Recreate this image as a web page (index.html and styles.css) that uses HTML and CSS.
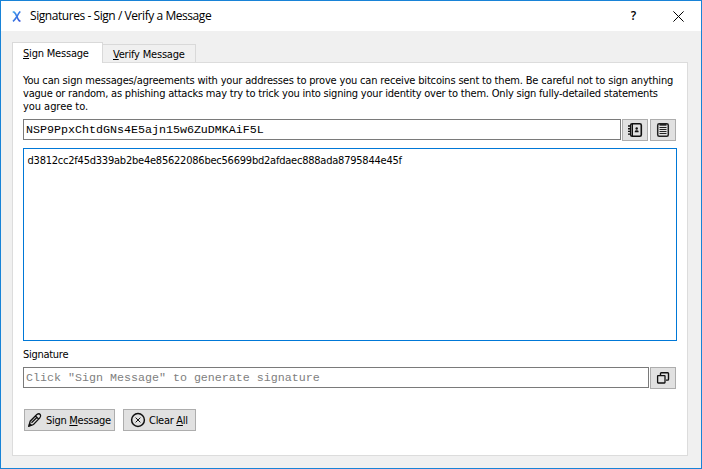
FILE: index.html
```html
<!DOCTYPE html>
<html lang="en">
<head>
<meta charset="utf-8">
<title>Signatures - Sign / Verify a Message</title>
<link rel="stylesheet" href="styles.css">
</head>
<body>
<div class="window">
  <header class="titlebar">
    <svg class="logo" width="10" height="11" viewBox="0 0 10 11" fill="none" stroke-width="1.6">
      <defs><linearGradient id="g" x1="0" y1="0" x2="1" y2="1"><stop offset="0" stop-color="#3fa4ee"/><stop offset="1" stop-color="#3350d8"/></linearGradient></defs>
      <path d="M.7 1h1.200c3 1.800 3 7.200 5.600 9h1" stroke="url(#g)"/>
      <path d="M8.300.500C6 2.500 6 4 5 5.500S3 8.500 1 10.300" stroke="url(#g)"/>
    </svg>
    <h1 class="title">Signatures - Sign / Verify a Message</h1>
    <span class="help">?</span>
    <svg class="close" width="11" height="11" viewBox="0 0 11 11" fill="none" stroke="#000" stroke-width="1"><path d="M.4.4l10.200 10.200M10.600.4L.4 10.600"/></svg>
  </header>
  <main class="body">
    <nav class="tabs">
      <div class="tab active"><u>S</u>ign Message</div>
      <div class="tab"><u>V</u>erify Message</div>
    </nav>
    <section class="panel">
      <p class="intro"><span class="l1">You can sign messages/agreements with your addresses to prove you can receive bitcoins sent to them. Be careful not to sign anything</span><br><span class="l2">vague or random, as phishing attacks may try to trick you into signing your identity over to them. Only sign fully-detailed statements</span><br><span class="l3">you agree to.</span></p>
      <div class="row">
        <div class="field">NSP9PpxChtdGNs4E5ajn15w6ZuDMKAiF5L</div>
        <div class="icon-btn gap1"><svg width="16" height="16" viewBox="0 0 16 16" fill="none" stroke="#111"><rect x="3.700" y="1.700" width="10.600" height="12.600" rx="1.500" stroke-width="1.600"/><path d="M5.500 2v12" stroke-width="1"/><path d="M1 4h3M1 6.700h3M1 9.400h3M1 12.100h3" stroke-width="1.400"/><circle cx="9.700" cy="6.500" r="1.200" fill="#111" stroke="none"/><path d="M7.800 10.200V9.200q0-1 1.900-1t1.900 1v1z" fill="#111" stroke="none"/></svg></div>
        <div class="icon-btn gap2"><svg width="16" height="16" viewBox="0 0 16 16" fill="none" stroke="#222"><rect x="2.700" y="1.700" width="10.600" height="12.600" rx="1.500" stroke-width="1.500"/><path d="M4.500 2.500h7" stroke-width="2.400"/><path d="M4.500 5.500h7M4.500 7.500h7M4.500 9.500h7M4.500 11.500h7" stroke-width="1"/></svg></div>
      </div>
      <div class="message">d3812cc2f45d339ab2be4e85622086bec56699bd2afdaec888ada8795844e45f</div>
      <div class="label">Signature</div>
      <div class="row">
        <div class="field placeholder">Click "Sign Message" to generate signature</div>
        <div class="icon-btn gap1"><svg width="16" height="16" viewBox="0 0 16 16" fill="none" stroke="#111"><path d="M5.500 5V3.500q0-.8.800-.8h6.400q.8 0 .8.800v5.800q0 .8-.8.800H11" stroke-width="1.400"/><rect x="2.600" y="5.600" width="7.400" height="7.400" rx=".5" stroke-width="1.300"/></svg></div>
      </div>
      <div class="actions">
        <div class="btn sign"><svg width="16" height="16" viewBox="0 0 16 16" fill="none" stroke="#111" stroke-width="1.300"><path d="M2 14l1.200-4.800L9.800 2.500q2.300-1.500 3.500.2 1 1.600-.5 3.200L6.500 12.500zM4.500 10.800L10.300 5M8.500 4l3.300 3.200"/><path d="M2 14l.6-2.300 1.700 1.500z" fill="#111"/></svg><span>Sign <u>M</u>essage</span></div>
        <div class="btn clear"><svg width="16" height="16" viewBox="0 0 16 16" fill="none" stroke="#111"><circle cx="8" cy="8" r="6.400" stroke-width="1.500"/><path d="M5.600 5.600l4.800 4.800M10.400 5.600l-4.800 4.800" stroke-width="1"/></svg><span>Clear <u>A</u>ll</span></div>
      </div>
    </section>
  </main>
</div>
</body>
</html>
```
FILE: styles.css
```css
* { box-sizing: border-box; }
body { margin: 0; font: 11px/13px "DejaVu Sans Condensed", "DejaVu Sans", sans-serif; font-stretch: condensed; letter-spacing: -.2px; color: #000; }
u { text-decoration: underline; text-underline-offset: 1px; text-decoration-thickness: 1px; text-decoration-skip-ink: none; }
.window { width: 702px; height: 469px; border: 1px solid #1883d7; background: #f0f0f0; display: flex; flex-direction: column; white-space: nowrap; overflow: hidden; }
.titlebar { height: 30px; background: #fff; display: flex; align-items: center; padding: 0 17px 0 11px; }
.logo { margin-right: 8px; }
.title { margin: 0; font: 12px/16px "Open Sans", sans-serif; letter-spacing: -.44px; flex: 1; }
.help { font: 600 12px/16px "Open Sans", sans-serif; margin-right: 37px; }
.body { padding: 11px 13px 12px 11px; display: flex; flex-direction: column; flex: 1; }
.tabs { display: flex; align-items: flex-end; height: 20px; }
.tab { width: 93px; height: 18px; border: 1px solid #d9d9d9; border-left: 0; border-bottom: 0; padding: 3px 0 0 10px; }
.tab.active { width: 91px; height: 21px; margin-bottom: -1px; background: #fff; border-left: 1px solid #d9d9d9; padding: 4px 0 0 10px; position: relative; }
.panel { flex: 1; background: #fff; border: 1px solid #dcdcdc; padding: 11px 10px 0; }
.intro { margin: 0; height: 45px; }
.l1 { letter-spacing: -.173px; }
.l2 { letter-spacing: -.208px; }
.l3 { letter-spacing: -.05px; }
.row { display: flex; }
.field { flex: 1; height: 21px; border: 1px solid #7a7a7a; padding: 2px; font: 11.667px/16px "Liberation Mono", monospace; letter-spacing: 0; }
.placeholder { color: #808080; }
.icon-btn { width: 26px; height: 22px; border: 1px solid #adadad; background: #e1e1e1; display: flex; align-items: center; justify-content: center; }
.gap1 { margin-left: 1px; }
.gap2 { margin-left: 2px; }
.icon-btn:last-child { margin-right: 1px; }
.message { height: 193px; margin-top: 7px; border: 1px solid #0078d7; padding: 5px 3.500px; letter-spacing: -.225px; }
.label { height: 26px; padding-top: 7px; letter-spacing: -.28px; }
.actions { display: flex; gap: 8px; margin: 20px 0 0 1px; }
.btn { height: 22px; border: 1px solid #adadad; background: #e1e1e1; display: flex; align-items: center; letter-spacing: -.28px; padding-top: 1px; }
.btn svg { flex: none; margin-top: -1px; }
.sign { width: 91px; padding-left: 2px; gap: 3px; }
.clear { width: 73px; padding-left: 6px; gap: 3px; }
```
